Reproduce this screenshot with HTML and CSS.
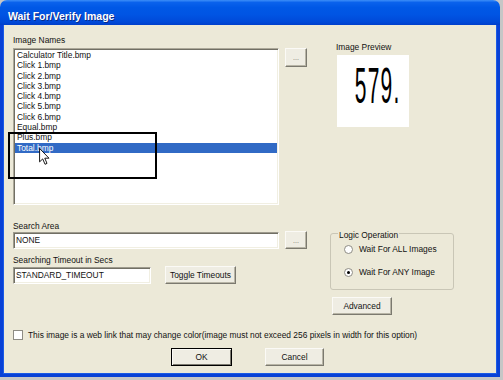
FILE: index.html
```html
<!DOCTYPE html>
<html lang="en">

<head>
    <meta charset="UTF-8">
    <title>Wait For/Verify Image</title>
    <link rel="stylesheet" href="styles.css">
</head>

<body>
    <div class="window">

        <div class="titlebar">
            <span class="title">Wait For/Verify Image</span>
        </div>

        <div class="dialog">

            <div class="top-row">
                <div class="names-col">
                    <div class="lbl">Image Names</div>
                    <ul class="listbox">
                        <li>Calculator Title.bmp</li>
                        <li>Click 1.bmp</li>
                        <li>Click 2.bmp</li>
                        <li>Click 3.bmp</li>
                        <li>Click 4.bmp</li>
                        <li>Click 5.bmp</li>
                        <li>Click 6.bmp</li>
                        <li>Equal.bmp</li>
                        <li>Plus.bmp</li>
                        <li class="selected">Total.bmp</li>
                    </ul>
                </div>

                <button type="button" class="btn btn-browse btn-browse-top">...</button>

                <div class="preview-col">
                    <div class="lbl">Image Preview</div>
                    <div class="preview"><span class="preview-digits">579.</span></div>
                </div>
            </div>

            <div class="mid-row">
                <div class="fields-col">
                    <div class="lbl">Search Area</div>
                    <div class="field-row">
                        <input type="text" class="textbox textbox-wide" value="NONE">
                        <button type="button" class="btn btn-browse">...</button>
                    </div>

                    <div class="lbl lbl-timeout">Searching Timeout in Secs</div>
                    <div class="field-row">
                        <input type="text" class="textbox textbox-short" value="STANDARD_TIMEOUT">
                        <button type="button" class="btn btn-toggle">Toggle Timeouts</button>
                    </div>
                </div>

                <div class="logic-col">
                    <div class="group">
                        <span class="legend">Logic Operation</span>
                        <label class="radio-row"><span class="radio"></span>Wait For ALL Images</label>
                        <label class="radio-row"><span class="radio checked"></span>Wait For ANY Image</label>
                    </div>
                    <button type="button" class="btn btn-advanced">Advanced</button>
                </div>
            </div>

            <label class="check-row"><span class="checkbox"></span>This image is a web link that may change color(image must not exceed 256 pixels in width for this option)</label>

            <div class="actions">
                <button type="button" class="btn btn-ok">OK</button>
                <button type="button" class="btn btn-cancel">Cancel</button>
            </div>
        </div>

        <!-- annotation drawn over the list -->
        <div class="callout"></div>
        <svg class="cursor" width="11" height="17" viewBox="0 0 12 19">
            <path d="M0.5 0.5 L0.5 15.5 L4 12.2 L6.6 18.2 L8.8 17.2 L6.3 11.4 L11 11.4 Z" fill="#fff" stroke="#000" stroke-width="1" stroke-linejoin="miter" />
        </svg>
    </div>
</body>

</html>
```

FILE: styles.css
```css
* {
    margin: 0;
    padding: 0;
    box-sizing: border-box;
}

body {
    background-color: #c6c6c6;
    font-family: "Liberation Sans", Arial, sans-serif;
    font-size: 8.4px;
    color: #111;
}

.window {
    position: relative;
    width: 500px;
    height: 377px;
}

.titlebar {
    height: 25px;
    padding: 10px 0 0 8px;
    border-radius: 7px 7px 0 0;
    background-image: linear-gradient(to bottom, #3d8ef8 0%, #0a62ec 10%, #0058e6 30%, #0054e3 60%, #0049d8 88%, #003fcb 100%);
}

.title {
    color: #fff;
    font-weight: bold;
    font-size: 10.5px;
    line-height: 12px;
    text-shadow: 1px 1px 0 #0a2c8a;
}

.dialog {
    height: 352px;
    padding: 10px 0 0 10px;
    background-color: #ece9d8;
    border: 3px solid #0841d6;
    border-top: none;
    box-shadow: inset 1px 0 0 #1a5ae6, inset -1px -1px 0 #1a5ae6;
}

.lbl {
    line-height: 10px;
    white-space: nowrap;
}

/* top part: list + preview */

.top-row {
    display: flex;
    align-items: flex-start;
}

.names-col {
    width: 266px;
}

.listbox {
    list-style: none;
    height: 157px;
    margin-top: 3px;
    background-color: #fff;
    border: 1px solid;
    border-color: #aca899 #fff #fff #aca899;
    box-shadow: inset 1px 1px 0 #716f64, inset -1px -1px 0 #f1efe2;
    padding: 1px 1px 0 1px;
}

.listbox li {
    line-height: 10.3px;
    height: 10.3px;
    padding-left: 2px;
    white-space: nowrap;
}

.listbox .selected {
    background-color: #316ac5;
    color: #fff;
}

.btn {
    font-family: inherit;
    font-size: 8.4px;
    color: #111;
    height: 18px;
    background-color: #efede3;
    border: 1px solid;
    border-color: #fbfaf6 #7b796f #7b796f #fbfaf6;
    box-shadow: inset -1px -1px 0 #b8b5a6;
    text-align: center;
}

.btn-browse {
    width: 22px;
    font-size: 7px;
    color: #6f6d66;
    margin-left: 6px;
}

.btn-browse-top {
    height: 19px;
    margin-top: 13px;
}

.preview-col {
    margin-left: 29px;
    margin-top: 7px;
}

.preview {
    width: 72px;
    height: 72px;
    margin-top: 3px;
    margin-left: 1px;
    background-color: #fff;
    display: flex;
    justify-content: center;
    padding: 6px 0 0 9px;
}

.preview-digits {
    font-size: 50px;
    line-height: 50px;
    letter-spacing: 3px;
    color: #000;
    transform: scaleX(0.42);
}

/* middle part: search fields + logic */

.mid-row {
    display: flex;
    align-items: flex-start;
    margin-top: 16px;
}

.fields-col {
    width: 294px;
}

.field-row {
    display: flex;
    align-items: center;
    height: 18px;
}

.textbox {
    height: 17px;
    font-family: inherit;
    font-size: 8.4px;
    color: #111;
    background-color: #fff;
    border: 1px solid;
    border-color: #9d9a8d #fff #fff #9d9a8d;
    box-shadow: inset 1px 1px 0 #716f64, inset -1px -1px 0 #f1efe2;
    padding: 0 2px;
    outline: none;
}

.textbox-wide {
    width: 266px;
}

.textbox-short {
    width: 138px;
}

.lbl-timeout {
    margin-top: 6px;
    margin-bottom: 1px;
}

.btn-toggle {
    width: 71px;
    margin-left: 14px;
}

.logic-col {
    margin-left: 23px;
    margin-top: 12px;
}

.group {
    width: 124px;
    height: 57px;
    border: 1px solid #c9c6b6;
    border-radius: 3px;
    padding: 0 0 0 13px;
}

.legend {
    display: inline-block;
    line-height: 10px;
    margin-top: -4px;
    margin-left: -6px;
    padding: 0 1px;
    background-color: #ece9d8;
    vertical-align: top;
}

.radio-row {
    display: flex;
    align-items: center;
    height: 12px;
    white-space: nowrap;
}

.radio-row:first-of-type {
    margin-top: -1px;
}

.radio-row + .radio-row {
    margin-top: 11px;
}

.radio {
    width: 9px;
    height: 9px;
    border-radius: 50%;
    border: 1px solid #8e8c84;
    background-color: #fff;
    margin-right: 6px;
    display: flex;
    align-items: center;
    justify-content: center;
}

.radio.checked::after {
    content: "";
    width: 3px;
    height: 3px;
    border-radius: 50%;
    background-color: #000;
}

.btn-advanced {
    width: 60px;
    margin-top: 7px;
    margin-left: 2px;
}

/* bottom */

.check-row {
    display: flex;
    align-items: center;
    height: 10px;
    margin-top: 15px;
    white-space: nowrap;
}

.checkbox {
    width: 10px;
    height: 10px;
    background-color: #fff;
    border: 1px solid #8e8c84;
    margin-right: 5px;
}

.actions {
    display: flex;
    gap: 33px;
    margin-top: 8px;
    padding-left: 158px;
}

.btn-ok {
    width: 61px;
    border: 1px solid #000;
    box-shadow: inset 1px 1px 0 #fbfaf6, inset -1px -1px 0 #7b796f;
}

.btn-cancel {
    width: 59px;
}

/* annotation over the list */

.callout {
    position: absolute;
    left: 8px;
    top: 132px;
    width: 149px;
    height: 47px;
    border: 2px solid #000;
}

.cursor {
    position: absolute;
    left: 39px;
    top: 148px;
}
```
